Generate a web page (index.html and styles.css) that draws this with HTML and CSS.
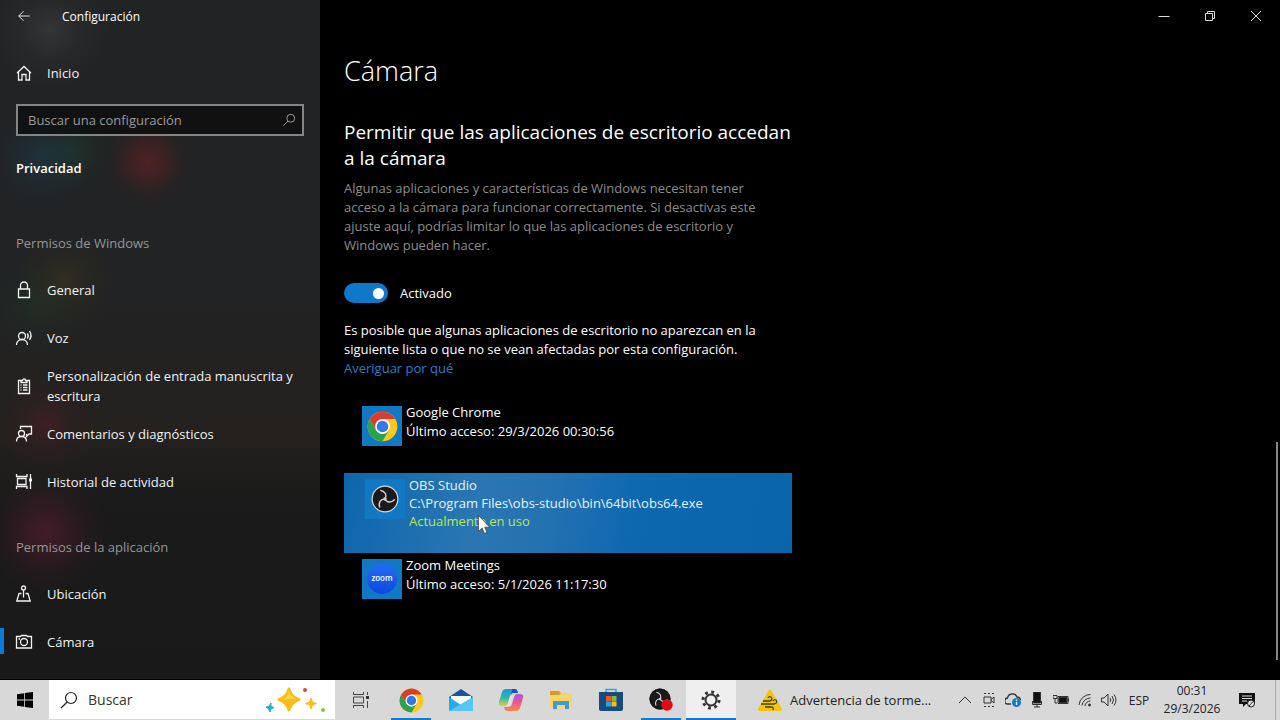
FILE: index.html
```html
<!DOCTYPE html>
<html lang="es">
<head>
    <meta charset="UTF-8">
    <meta name="viewport" content="width=device-width, initial-scale=1.0">
    <title>Configuración - Cámara</title>
    <link rel="stylesheet" href="styles.css">
</head>
<body>
    <!-- Shared logos -->
    <svg class="sprite" aria-hidden="true">
        <symbol id="chrome" viewBox="0 0 48 48">
            <circle cx="24" cy="24" r="23" fill="#fbc91f"/>
            <path d="M4.100 12.500A23 23 0 0 1 43.900 12.500H24L14 29.800z" fill="#db3a2e"/>
            <path d="M4.100 12.500A23 23 0 0 0 24 47L34 29.700 24 36 14 29.800z" fill="#2ba24c"/>
            <circle cx="24" cy="24" r="11.500" fill="#fff"/>
            <circle cx="24" cy="24" r="9" fill="#3478e5"/>
        </symbol>
        <symbol id="obs" viewBox="0 0 48 48">
            <circle cx="24" cy="24" r="23" fill="#d9d9dc"/>
            <circle cx="24" cy="24" r="21" fill="#1c191b"/>
            <g fill="none" stroke="#cfcfd3" stroke-width="2.500">
                <path d="M24 24C28 18 25 11 16 9"/>
                <path d="M24 24C28 18 25 11 16 9" transform="rotate(120 24 24)"/>
                <path d="M24 24C28 18 25 11 16 9" transform="rotate(240 24 24)"/>
            </g>
            <circle cx="24" cy="24" r="3" fill="#cfcfd3"/>
        </symbol>
    </svg>

    <div class="window">
        <!-- Sidebar -->
        <aside class="sidebar">
            <div class="titlebar">
                <button class="back" aria-label="Atrás">
                    <svg class="icon" viewBox="0 0 16 16"><path d="M14.500 8H2M7.500 2.500 2 8l5.500 5.500"/></svg>
                </button>
                <span>Configuración</span>
            </div>
            <a class="nav-item home" href="#">
                <svg class="icon" viewBox="0 0 16 16"><path d="M1 8 8 1.500 15 8M2.500 7v8H6V9.500h4V15h3.500V7"/></svg>
                <span>Inicio</span>
            </a>
            <div class="search">
                <input type="text" placeholder="Buscar una configuración" aria-label="Buscar una configuración">
                <svg class="search-icon" viewBox="0 0 16 16"><circle cx="10" cy="6" r="4.500"/><path d="M6.800 9.200 1.500 14.500"/></svg>
            </div>
            <h2 class="section-title">Privacidad</h2>

            <nav>
                <h3 class="nav-group first">Permisos de Windows</h3>
                <a class="nav-item" href="#">
                    <svg class="icon" viewBox="0 0 16 16"><path d="M2.500 7h11v8.500h-11zM4.500 7V3.500a3.500 3.500 0 0 1 7 0V7"/></svg>
                    <span>General</span>
                </a>
                <a class="nav-item" href="#">
                    <svg class="icon" viewBox="0 0 16 16"><circle cx="6" cy="6" r="3.500"/><path d="M.5 15c0-3.500 2.500-5.500 5.500-5.500s5.500 2 5.500 5.500M11.300 3.500a4 4 0 0 1 0 5M13.500 1a8 8 0 0 1 0 9"/></svg>
                    <span>Voz</span>
                </a>
                <a class="nav-item" href="#">
                    <svg class="icon" viewBox="0 0 16 16"><path d="M5 2.500H2.500v13h11v-13H11M5 4.500v-2h1.500c0-2 3-2 3 0H11v2zM4.500 7h1M7 7h4.500M4.500 9.500h1M7 9.500h4.500M4.500 12h1M7 12h4.500"/></svg>
                    <span>Personalización de entrada manuscrita y escritura</span>
                </a>
                <a class="nav-item" href="#">
                    <svg class="icon" viewBox="0 0 16 16"><circle cx="5.500" cy="7.500" r="3"/><path d="M.5 15.500c0-3 2-5 5-5s5 2 5 5M4.500 3V.5h11v7.500H13l-2.500 2.500V8"/></svg>
                    <span>Comentarios y diagnósticos</span>
                </a>
                <a class="nav-item" href="#">
                    <svg class="icon" viewBox="0 0 16 16"><path d="M.5 0v2.500h10.500V0M.5 15v-2.500h10.500V15M1.500 4.500h8.500v6h-8.500zM14.500 0v15"/><path d="M13 4.500h3v3h-3z" fill="currentColor" stroke="none"/></svg>
                    <span>Historial de actividad</span>
                </a>
                <h3 class="nav-group">Permisos de la aplicación</h3>
                <a class="nav-item" href="#">
                    <svg class="icon" viewBox="0 0 16 16"><circle cx="7.500" cy="2" r="2"/><path d="M7.500 4v7.500M5.500 7.500H3L.8 15h13.400L12 7.500H9.500"/></svg>
                    <span>Ubicación</span>
                </a>
                <a class="nav-item active" href="#" aria-current="page">
                    <svg class="icon" viewBox="0 0 16 16"><path d="M.5 2.500H4.500l1-1h5l1 1h4v11.500H.5z"/><circle cx="8" cy="8" r="3.500"/><path d="M2.500 5H4"/></svg>
                    <span>Cámara</span>
                </a>
            </nav>
        </aside>

        <!-- Settings page -->
        <main class="content">
            <div class="window-controls">
                <button aria-label="Minimizar"><svg viewBox="0 0 12 12"><path d="M.5 6.500h11"/></svg></button>
                <button aria-label="Restaurar"><svg viewBox="0 0 12 12"><path d="M1.500 3.500h7v7h-7zM3.500 3V1.500h7v7H9"/></svg></button>
                <button aria-label="Cerrar"><svg viewBox="0 0 12 12"><path d="m1 1 10 10M11 1 1 11"/></svg></button>
            </div>

            <div class="page">
                <h1>Cámara</h1>
                <h2>Permitir que las aplicaciones de escritorio accedan a la cámara</h2>
                <p class="description">Algunas aplicaciones y características de Windows necesitan tener acceso a la cámara para funcionar correctamente. Si desactivas este ajuste aquí, podrías limitar lo que las aplicaciones de escritorio y Windows pueden hacer.</p>
                <label class="toggle">
                    <input type="checkbox" role="switch" checked>
                    <span>Activado</span>
                </label>
                <p>Es posible que algunas aplicaciones de escritorio no aparezcan en la siguiente lista o que no se vean afectadas por esta configuración.</p>
                <a class="link" href="#">Averiguar por qué</a>

                <ul class="apps">
                    <li class="app">
                        <div class="app-icon"><svg class="logo" viewBox="0 0 48 48"><use href="#chrome"/></svg></div>
                        <div>
                            <div>Google Chrome</div>
                            <div>Último acceso: 29/3/2026 00:30:56</div>
                        </div>
                    </li>
                    <li class="app selected">
                        <div class="app-icon"><svg class="logo" viewBox="0 0 48 48"><use href="#obs"/></svg></div>
                        <div>
                            <div>OBS Studio</div>
                            <div>C:\Program Files\obs-studio\bin\64bit\obs64.exe</div>
                            <div class="in-use">Actualmente en uso</div>
                        </div>
                        <svg class="cursor" viewBox="0 0 12 19"><path d="M.5.5v16l3.700-3.500 2.300 5.500 2.500-1-2.300-5.300h5z" fill="#fff" stroke="#222" stroke-width=".6"/></svg>
                    </li>
                    <li class="app">
                        <div class="app-icon"><span class="zoom-logo">zoom</span></div>
                        <div>
                            <div>Zoom Meetings</div>
                            <div>Último acceso: 5/1/2026 11:17:30</div>
                        </div>
                    </li>
                </ul>
            </div>
            <div class="scroll-thumb"></div>
        </main>
    </div>

    <!-- Taskbar -->
    <footer class="taskbar">
        <button class="task start" aria-label="Inicio">
            <svg viewBox="0 0 16 16" width="16" height="16"><path d="M0 2.200 7 1.200v6.400H0zM7.800 1.100 16 0v7.600H7.800zM0 8.400h7v6.400l-7-1zM7.800 8.400H16V16l-8.200-1.100z" fill="#000"/></svg>
        </button>
        <label class="task-search">
            <svg viewBox="0 0 18 18" width="18" height="18" fill="none" stroke="#222" stroke-width="1.200"><circle cx="11" cy="7" r="5.500"/><path d="M7.200 11 1 17"/></svg>
            <input type="text" placeholder="Buscar" aria-label="Buscar">
            <svg viewBox="0 0 62 28" width="62" height="28">
                <path d="M24 3q2 8 10 10.500-8 2.500-10 10.500-2-8-10-10.500Q22 11 24 3z" fill="#f7bd18" stroke="#f7bd18" stroke-width="3" stroke-linejoin="round"/>
                <path d="M24 4q1 8 8 9-8-1-14 1 5-3 6-10z" fill="#ffd84a"/>
                <path d="m46 12 1.500 4 4 1.500-4 1.500-1.500 4-1.500-4-4-1.500 4-1.500z" fill="#f8bd25" stroke="#f8bd25"/>
                <path d="m6 17 0 3.500 3 1-3 1.500-1 3-1.500-3L1 21l3-.8z" fill="#2ba9d5" stroke="#2ba9d5"/>
                <circle cx="40" cy="4" r="2" fill="#d65331"/>
                <circle cx="58" cy="24" r="2" fill="#8cc152"/>
            </svg>
        </label>
        <div class="tasks">
            <button class="task" aria-label="Vista de tareas">
                <svg viewBox="0 0 18 18" width="18" height="18" fill="none" stroke="#444"><path d="M1.500 1v2.500h10V1M1.500 17v-2.500h10V17M1.500 6h10v6h-10zM15.500 1v3M15.500 10v7"/><path d="M14 5h3v3h-3z" fill="#333" stroke="none"/></svg>
            </button>
            <button class="task open" aria-label="Google Chrome"><svg viewBox="0 0 48 48" width="25" height="25"><use href="#chrome"/></svg></button>
            <button class="task" aria-label="Correo">
                <svg viewBox="0 0 26 24" width="26" height="24"><path d="m1 9 12-8 12 8v5H1z" fill="#16589a"/><path d="M3 8h20v10H3z" fill="#fff"/><path d="M1 9l12 8 12-8v14H1z" fill="#2aa9e3"/><path d="M25 9v14H1z" fill="#58c6f2"/></svg>
            </button>
            <button class="task" aria-label="Copilot">
                <svg viewBox="0 0 26 24" width="26" height="24">
                    <defs>
                        <linearGradient id="cool" x1="0" y1="0" x2="0" y2="1"><stop offset="0" stop-color="#2295dc"/><stop offset=".5" stop-color="#29b7ab"/><stop offset="1" stop-color="#dfd03f"/></linearGradient>
                        <linearGradient id="warm" x1="0" y1="0" x2="0" y2="1"><stop offset="0" stop-color="#a45be0"/><stop offset=".5" stop-color="#ec5790"/><stop offset="1" stop-color="#f58b4b"/></linearGradient>
                    </defs>
                    <path d="M8 1h9q2 0 3 4h-5q-2 0-3 3l-2 7q-1 3-3 3H4q-4 0-3-4l3-10Q5 1 8 1z" fill="url(#cool)"/>
                    <path d="M18 23H9q-2 0-3-4h5q2 0 3-3l2-7q1-3 3-3h3q4 0 3 4l-3 10q-1 3-4 3z" fill="url(#warm)"/>
                    <path d="M14 1h3q2 0 3 4h-5q-1 0-2 2z" fill="#1f4fb8"/>
                    <path d="m12 8-2.500 9h3L15 8z" fill="#e4e0e8"/>
                </svg>
            </button>
            <button class="task" aria-label="Explorador de archivos">
                <svg viewBox="0 0 24 20" width="24" height="20"><path d="M1 1h9l2 2h10v5H1z" fill="#d99b22"/><path d="M1 5 10 5 12 3h11v14H1z" fill="#f8d568"/><path d="M4 11h16v8h-4v-4H8v4H4z" fill="#4699c9"/></svg>
            </button>
            <button class="task" aria-label="Microsoft Store">
                <svg viewBox="0 0 24 24" width="24" height="24"><path d="M7 5V1.500h10V5" fill="none" stroke="#35a4dd" stroke-width="1.500"/><path d="M0 4h24v17q0 2-2 2H2q-2 0-2-2z" fill="#174b7d"/><path d="M7 8h5v5H7z" fill="#f05133"/><path d="M12.500 8h5v5h-5z" fill="#83bd35"/><path d="M7 13.500h5v5H7z" fill="#29a8e0"/><path d="M12.500 13.500h5v5h-5z" fill="#fbbd1b"/></svg>
            </button>
            <button class="task open" aria-label="OBS Studio">
                <svg viewBox="0 0 24 24" width="24" height="24"><circle cx="11" cy="11" r="10.500" fill="#111"/><svg width="20" height="20" x="1" y="1" viewBox="2 2 44 44"><use href="#obs" width="48" height="48"/></svg><circle cx="11" cy="11" r="9.800" fill="none" stroke="#111" stroke-width="1.500"/><circle cx="18" cy="17" r="5.700" fill="#e00b12"/></svg>
            </button>
            <button class="task open current" aria-label="Configuración">
                <svg viewBox="0 0 20 20" width="20" height="20" fill="none" stroke="#333"><circle cx="10" cy="10" r="5.500" stroke-width="2"/><circle cx="10" cy="10" r="8" stroke-width="3" stroke-dasharray="2.800 3.483"/></svg>
            </button>
        </div>
        <button class="weather">
            <svg viewBox="0 0 24 22" width="24" height="22"><path d="M12 2 22.500 20.500h-21z" fill="#f3c50b" stroke="#f3c50b" stroke-width="3" stroke-linejoin="round"/><path d="M5 12h7q3-1 1-4-2-1-3 1M3 15h13q4-1 2-4-2-1-3 1M7 18h6q3 0 2 3" fill="none" stroke="#49400f" stroke-width="1.300"/></svg>
            <span>Advertencia de torme...</span>
        </button>
        <div class="tray">
            <button aria-label="Mostrar iconos ocultos"><svg viewBox="0 0 16 16"><path d="m2 11 6-6 6 6"/></svg></button>
            <button aria-label="Reunirse ahora"><svg viewBox="0 0 16 16"><path d="M3 5h7v6H3zM10 7.500 13 5v6l-3-2.500M3 1.500h2M7 1.500h2M11 1.500h2M3 14.500h2M7 14.500h2M11 14.500h2"/></svg></button>
            <button aria-label="OneDrive"><svg viewBox="0 0 16 16"><path d="M6 12H3a3 3 0 0 1-.5-6A5 5 0 0 1 12 5q3 0 3.500 3" stroke-width="1.300"/><circle cx="11.500" cy="10.500" r="4.500" fill="#1579c8" stroke="none"/><path d="M11.500 9.800V13M11.500 7.500v1.200" stroke="#fff" stroke-width="1.300"/></svg></button>
            <button aria-label="Micrófono"><svg viewBox="0 0 16 16"><path d="M4.500 0h7v11h-7z" fill="#111"/><path d="M3.500 9v3.500h9V9M8 12v3M5 15h6"/></svg></button>
            <button aria-label="Batería"><svg viewBox="0 0 16 16"><path d="M5 4.500h10v7H5zM15.500 6.500v3M0 3.500h4v3H0zM2 7v4h2"/><path d="M6 5.500h8v5H6z" fill="#111"/></svg></button>
            <button aria-label="Red"><svg viewBox="0 0 16 16"><path d="M2 13A11.500 11.500 0 0 1 13.500 2.500M5 13.500A8.500 8.500 0 0 1 13.500 6M8 14a5.500 5.500 0 0 1 5.500-5"/><circle cx="12.500" cy="13" r="1" fill="#333"/></svg></button>
            <button aria-label="Volumen"><svg viewBox="0 0 16 16"><path d="M.5 6H3l4-4v12l-4-4H.5zM9 6q1.500 2 0 4M11 4q3 4 0 8M13 2.500q4 5.500 0 11"/></svg></button>
            <button class="lang">ESP</button>
            <button class="clock"><span>00:31</span><span>29/3/2026</span></button>
            <button class="notifications" aria-label="Notificaciones"><svg viewBox="0 0 16 16"><path d="M0 1h16v11H7l-3 3v-3H0z" fill="#111" stroke="none"/><path d="M3 4h10M3 6.500h10M3 9h5" stroke="#ddd"/><circle cx="12" cy="11.500" r="3.500" fill="#ddd" stroke="#222"/><path d="m10 14 4.500-5"/></svg></button>
        </div>
    </footer>
</body>
</html>
```
FILE: styles.css
```css
* {
    box-sizing: border-box;
}

body {
    margin: 0;
    height: 100vh;
    display: flex;
    flex-direction: column;
    overflow: hidden;
    background: #000;
    color: #fff;
    font-family: "Segoe UI", "Open Sans", "Noto Sans", sans-serif;
    font-size: 13px;
    line-height: 19px;
}

h1, h2, h3, p, ul {
    margin: 0;
    padding: 0;
    font-weight: 400;
}

button {
    display: flex;
    align-items: center;
    justify-content: center;
    padding: 0;
    border: 0;
    background: none;
    color: inherit;
    font: inherit;
}

input {
    min-width: 0;
    padding: 0;
    border: 0;
    outline: 0;
    background: none;
    color: inherit;
    font: inherit;
}

.sprite {
    display: none;
}

.window {
    flex: 1;
    display: flex;
    min-height: 0;
}

/* Sidebar, with the blurred wallpaper behind it */
.sidebar {
    flex: 0 0 320px;
    margin-bottom: 1px;
    overflow: hidden;
    background:
        radial-gradient(circle at 148px 162px, rgba(100, 32, 34, 0.65), rgba(90, 32, 34, 0.45) 18px, rgba(80, 32, 34, 0.12) 32px, transparent 44px),
        radial-gradient(circle at 42px 158px, rgba(25, 64, 78, 0.5), rgba(25, 64, 78, 0.15) 30px, transparent 50px),
        radial-gradient(circle at 72px 152px, rgba(26, 68, 48, 0.4), rgba(26, 68, 48, 0.1) 26px, transparent 40px),
        radial-gradient(circle at 50px 30px, rgba(85, 85, 85, 0.35), rgba(85, 85, 85, 0.1) 30px, transparent 60px),
        radial-gradient(circle at 65px 280px, rgba(70, 58, 28, 0.4), rgba(70, 58, 28, 0.1) 28px, transparent 50px),
        radial-gradient(circle at 36px 305px, rgba(28, 60, 40, 0.35), rgba(28, 60, 40, 0.1) 28px, transparent 50px),
        radial-gradient(circle at 46px 424px, rgba(90, 28, 42, 0.45), rgba(90, 28, 42, 0.12) 26px, transparent 46px),
        radial-gradient(circle at 46px 532px, rgba(84, 28, 48, 0.7), rgba(84, 28, 48, 0.35) 26px, rgba(84, 28, 48, 0.1) 44px, transparent 64px),
        linear-gradient(#222324, #222324 300px, #24211f 430px, #1a1a1a 510px, #191919);
}

.titlebar {
    display: flex;
    align-items: center;
    height: 32px;
    font-size: 12px;
}

.back {
    width: 48px;
    height: 32px;
    margin-right: 14px;
}

.icon {
    flex: none;
    width: 16px;
    height: 16px;
    overflow: visible;
    fill: none;
    stroke: currentColor;
    stroke-width: 1.3;
}

.back .icon {
    width: 14px;
    height: 14px;
    stroke-width: 1;
}

.nav-item {
    display: flex;
    align-items: center;
    gap: 15px;
    height: 48px;
    padding: 0 16px;
    color: #f2f2f2;
    line-height: 20px;
    text-decoration: none;
}

.home {
    margin: 17px 0 7px;
}

.active {
    padding-left: 12px;
    border: solid;
    border-width: 0 0 0 4px;
    border-image: linear-gradient(transparent 23%, #0b7bd3 23%, #0b7bd3 74%, transparent 74%) 1;
}

.search {
    display: flex;
    align-items: center;
    height: 32px;
    margin: 0 16px;
    padding: 0 6px 0 10px;
    border: 2px solid #858585;
    background: rgba(0, 0, 0, 0.5);
}

.search input {
    flex: 1;
}

.search input::placeholder {
    color: #9a9a9a;
    opacity: 1;
}

.search-icon {
    width: 14px;
    height: 14px;
    fill: none;
    stroke: #aaa;
}

.section-title {
    padding: 22px 16px;
    font-size: 13px;
    font-weight: 600;
    line-height: 20px;
}

.nav-group {
    padding: 31px 16px 13px;
    color: #969696;
    font-size: 13px;
    line-height: 20px;
}

.nav-group.first {
    padding-top: 33px;
}

/* Main content */
.content {
    position: relative;
    flex: 1;
    min-width: 0;
}

.window-controls {
    display: flex;
    justify-content: flex-end;
    padding-right: 1px;
}

.window-controls button {
    width: 46px;
    height: 32px;
}

.window-controls svg {
    width: 12px;
    height: 12px;
    fill: none;
    stroke: #ddd;
}

.page {
    max-width: 472px;
    padding: 19px 0 0 24px;
}

.page h1 {
    margin-bottom: 28px;
    font-size: 27px;
    font-weight: 300;
    line-height: 40px;
}

.page h2 {
    margin-bottom: 8px;
    font-size: 19px;
    line-height: 26px;
}

.page p {
    padding-right: 24px;
}

.page .description {
    color: #8c8c8c;
}

.toggle {
    display: flex;
    align-items: center;
    gap: 12px;
    margin: 28px 0 18px;
    line-height: 20px;
}

.toggle input {
    appearance: none;
    display: flex;
    align-items: center;
    justify-content: flex-end;
    width: 44px;
    height: 20px;
    margin: 0;
    padding-right: 4px;
    border-radius: 10px;
    background: #0f78cb;
}

.toggle input::after {
    content: "";
    width: 11px;
    height: 11px;
    border-radius: 50%;
    background: #fff;
}

.link {
    color: #2b7dc5;
    text-decoration: none;
}

.apps {
    margin-top: 22px;
    list-style: none;
}

.app {
    position: relative;
    display: flex;
    gap: 4px;
    min-height: 73px;
    padding: 3px 18px;
}

.app-icon {
    display: flex;
    align-items: center;
    justify-content: center;
    flex: none;
    width: 40px;
    height: 40px;
    margin-top: 3px;
    background: #1178c4;
}

.logo {
    width: 31px;
    height: 31px;
}

.selected {
    min-height: 80px;
    padding: 3px 21px;
    background: linear-gradient(100deg, #0d66ac, #2b76b2 30%, #2572b0 45%, #0d68b0 65%, #0964ab);
    color: #e6f4ff;
    line-height: 18px;
}

.selected .logo {
    width: 28px;
    height: 28px;
}

.in-use {
    color: #b5e84e;
}

.cursor {
    position: absolute;
    top: 42px;
    left: 134px;
    width: 12px;
    height: 19px;
}

.zoom-logo {
    width: 30px;
    height: 30px;
    border-radius: 50%;
    background: linear-gradient(#236cf5, #0b48df);
    font-size: 8px;
    font-weight: 600;
    line-height: 28px;
    text-align: center;
}

.scroll-thumb {
    position: absolute;
    right: 2px;
    bottom: 20px;
    width: 2px;
    height: 32%;
    background: #858585;
}

/* Taskbar */
.taskbar {
    display: flex;
    height: 40px;
    background: #d8d8d8;
    color: #222;
}

.task {
    position: relative;
    width: 50px;
    height: 40px;
}

.start {
    width: 49px;
}

.task-search {
    display: flex;
    align-items: center;
    width: 286px;
    height: 39px;
    padding: 0 8px 0 11px;
    background: #fff;
    font-size: 14px;
}

.task-search input {
    flex: 1;
    margin-left: 10px;
}

.task-search input::placeholder {
    color: #333;
    opacity: 1;
}

.tasks {
    display: flex;
    margin-left: 1px;
}

.open::after {
    content: "";
    position: absolute;
    bottom: 0;
    left: 5px;
    right: 5px;
    height: 2px;
    background: #1478ce;
}

.current {
    background: #efefef;
}

.current::after {
    left: 0;
    right: 0;
}

.weather {
    gap: 8px;
    margin-left: 22px;
}

.tray {
    display: flex;
    margin-left: auto;
    margin-right: 4px;
    padding-right: 8px;
    border-right: 1px solid #aaa;
}

.tray button {
    width: 24px;
}

.tray svg {
    width: 16px;
    height: 16px;
    fill: none;
    stroke: #333;
}

.tray .lang {
    width: 36px;
    font-size: 12px;
}

.tray .clock {
    flex-direction: column;
    width: 70px;
    font-size: 12px;
    line-height: 18px;
}

.tray .notifications {
    width: 40px;
}
```
